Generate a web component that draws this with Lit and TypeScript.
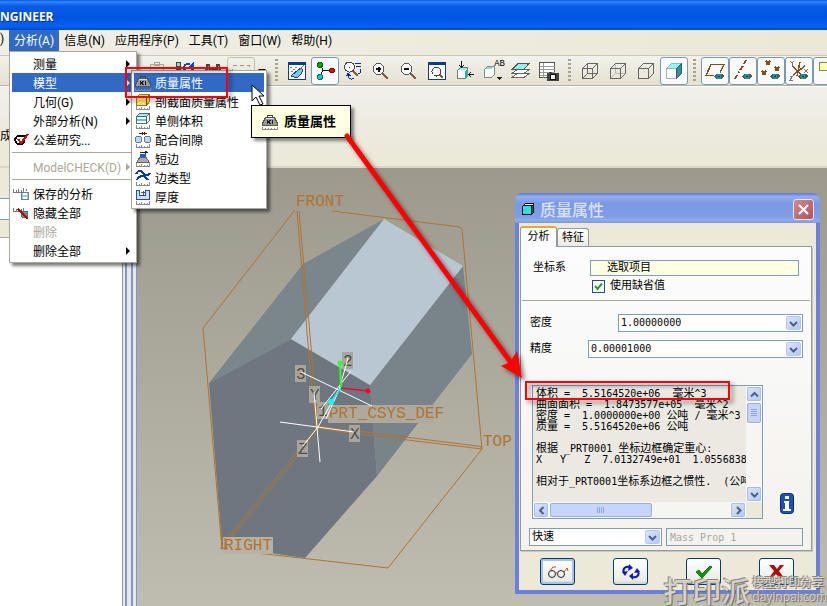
import { LitElement, html, svg, css, nothing } from "lit";
import type { TemplateResult, SVGTemplateResult } from "lit";
import { customElement } from "lit/decorators.js";
import { classMap } from "lit/directives/class-map.js";

const icon = (w: number, h: number, body: unknown) =>
  html`<svg class="ico" width=${w} height=${h} viewBox="0 0 ${w} ${h}" shape-rendering="crispEdges" aria-hidden="true">${body}</svg>`;

/* ---------- menu icons ---------- */
const ruler = svg`<path d="M1.500 12v3.500h13V12M4.500 14v1M6.500 13v2M9.500 14v1M12.500 14v1" fill="none" stroke="#8a8a8a"/>`;

const weight = svg`
  <path d="M5.500 3V1.500h5V3" stroke="#444" fill="none"/>
  <path d="M3.500 3.500h9l3 6v2H0.500v-2z" fill="#9a9a9a" stroke="#555"/>
  <path d="M4 4h7l1 1H3z" fill="#dcdcdc"/>
  <path d="M5.500 6v4M8.500 6l-2 2 2 2M10.500 6v4" stroke="#222" fill="none"/>
  <path d="M0.500 13v2.500h15V13M3.500 14v1M6.500 14v1M9.500 14v1M12.500 14v1" stroke="#8a8a8a" fill="none"/>`;

const menuIcons: Record<string, SVGTemplateResult> = {
  mass: weight,
  section: svg`<path d="M1.500 3.500l3-3h10v7l-3 4h-10z" fill="#ffe05a" stroke="#a67c00"/><path d="M3 10l8-6M3 7l4-3M6 11l5-4" stroke="#fff9b0"/><path d="M11.500 3.500v8M1.500 3.500h10l3-3" stroke="#7a5c00" fill="none"/>${ruler}`,
  volume: svg`<path d="M1.500 3.500l3-3h10v7l-3 3h-10z" fill="#fff" stroke="#666"/><path d="M2 3l3-2h9l-2 2z" fill="#8ff"/><path d="M2 6h9v2H2z" fill="#5cc"/><path d="M11.500 3.500v7M1.500 3.500h10l3-3" fill="none" stroke="#466"/>${ruler}`,
  clearance: svg`<path d="M4 1.500h8M7 0v3M9 0v3" stroke="#222"/><rect x="0.500" y="4.500" width="6" height="6" rx="2" fill="#b8d8f4" stroke="#678"/><rect x="9.500" y="4.500" width="6" height="6" rx="2" fill="#b8d8f4" stroke="#678"/>${ruler}`,
  short: svg`<path d="M5 1.500h7M10 0l2 1.500L10 3" stroke="#222" fill="none"/><path d="M5 3h6v3H5z" fill="#0a64d8"/><path d="M5 6h6l3 5H2z" fill="#aaa" stroke="#666"/>${ruler}`,
  edge: svg`<path d="M1 4c2-4 5-4 7-1s5 3 7 0M2 10c2-5 8-5 11 0" stroke="#0a3aa8" stroke-width="2" fill="none"/>${ruler}`,
  thick: svg`<path d="M1.500 1.500h3v5h6v-5h4v9h-13z" fill="#d4e0fa" stroke="#1c4bbd"/><path d="M6 3.500h4M8.500 2v4" stroke="#555"/>${ruler}`,
  sigma: svg`<path d="M14 3.500H7a4.500 4.500 0 1 0 4 3" fill="none" stroke="#000" stroke-width="2"/><path d="M5 7l3 4L15 2" stroke="#e00000" stroke-width="2" fill="none"/>`,
  saved: svg`<path d="M0.500 3v3M3.500 4v2M5.500 3v3M8.500 4v2M10.500 2v4M13.500 3v2M0 6.500h9" stroke="#777"/><rect x="8.500" y="6.500" width="7" height="7" fill="#9cc" stroke="#688"/><path d="M10 7h4v2h-4zM10 11h4v2h-4z" fill="#fff"/>`,
  hidden: svg`<path d="M0.500 3v3M3.500 4v2M5.500 3v3M8.500 4v2M10.500 3v3M0 6.500h9" stroke="#777"/><path d="M8 6h6v6H9z" fill="#699" stroke="#666"/><path d="M5 4l10 10" stroke="#b00000" stroke-width="2"/>`,
};

/* ---------- toolbar icons, each 20 x 20 ---------- */
const lens = svg`<path d="M11 12l6 6" stroke="#8a5a3a" stroke-width="2"/><circle cx="7.500" cy="8" r="5.500" fill="#f6f8fa" stroke="#555"/>`;
const eye = svg`<path d="M9 15l2-2h6l2 2-2 3h-6z" fill="#555"/><circle cx="14" cy="15.500" r="2.500" fill="#0a9a9a"/><path d="M13 15h2v1h-2z" fill="#033"/>`;
const frame = svg`<rect x="1.500" y="1.500" width="17" height="17" fill="#fff" stroke="#0a3a98"/><path d="M1 1h18v3H1z" fill="#0a3a98"/>`;

const toolIcons: Record<string, SVGTemplateResult> = {
  paste: svg`<path d="M3.500 3.500h13v14h-13zM7.500 1.500h5v3h-5z" fill="#eceada" stroke="#aaa794"/>`,
  regen: svg`<path d="M1.500 1.500h4v4h-4zM1.500 8.500h4v4h-4z" fill="#8dd" stroke="#444"/><path d="M9 7c0-4 4-5 6-3M18 6c0 5-4 6-7 5" fill="none" stroke="#1746b0" stroke-width="2"/><path d="M13 6h6V1zM7 6h5l-2 5z" fill="#1746b0"/>`,
  find: svg`<path d="M3 3h4v4h6V3h4l2 12h-7v-5H9v5H1z" fill="#444"/><path d="M5 5v7M15 5v7" stroke="#999"/>`,
  select: svg`<rect x="1.500" y="4.500" width="17" height="11" fill="none" stroke="#99968a" stroke-width="1" stroke-dasharray="4 3"/>`,
  repaint: svg`${frame}<path d="M4 15l7-6 3-2 2 2-2 4-4 4z" fill="#7cc4f4" stroke="#246"/><path d="M13 8l4-4" stroke="#a60"/><path d="M3 6h2M6 8h2M4 10h2M8 6h2" stroke="#3090e0"/>`,
  spin: svg`<path d="M5 4l3 5-3 7M8 9.500h8" stroke="#111" fill="none"/><circle cx="5" cy="4" r="2.500" fill="#0a0" stroke="#060"/><circle cx="17" cy="9.500" r="2.500" fill="#e00" stroke="#800"/><circle cx="5" cy="16" r="2.500" fill="#0cc" stroke="#077"/>`,
  orient: svg`<path d="M10 10l5 5" stroke="#8a5a3a" stroke-width="2"/><circle cx="6.500" cy="6" r="5" fill="#f6f8fa" stroke="#444"/><path d="M6 6h1M12 2.500h6M13 5.500h5M17 8c2 2 1 4-2 5M5 14c0 4 4 5 6 3" stroke="#0a2aa0" fill="none"/><path d="M3 15h5l-3-4z" fill="#0a2aa0"/>`,
  zoomin: svg`${lens}<path d="M5 8h5M7.500 5.500v5" stroke="#111" stroke-width="2"/>`,
  zoomout: svg`${lens}<path d="M5 8h5" stroke="#111" stroke-width="2"/>`,
  refit: svg`${frame}<path d="M12 13l4 4" stroke="#8a5a3a" stroke-width="2"/><circle cx="9.500" cy="10.500" r="4.500" fill="#eef6fa" stroke="#444"/>`,
  reorient: svg`<path d="M2.500 9.500l3-3h7v8l-3 3h-7z" fill="#fff" stroke="#777"/><path d="M10 10l3-3v8l-3 3z" fill="#3aa"/><path d="M3 9l3-2h6l-2 2z" fill="#8ee"/><path d="M6.500 0v6M4 4l2.500 2L9 4M19 13.500h-5M16 11l-2 2.500 2 2.500" stroke="#111" fill="none"/>`,
  views: svg`<path d="M1.500 8.500l3-3h7v8l-3 3h-7z" fill="#fff" stroke="#888"/><path d="M14 16h5l-2.500 3z" fill="#222"/><path d="M2 8l3-2h6l-3 2z" fill="#8dd"/>`,
  layers: svg`<path d="M1 16.500l5-4h12l-5 4zM1 12.500l5-4h12l-5 4z" fill="#fff" stroke="#666"/><path d="M1 8.500l6-6h11l-5 6z" fill="#8ff0f0" stroke="#555"/>`,
  viewmgr: svg`<path d="M0.500 1.500h15v15h-15z" fill="#fff" stroke="#555"/><path d="M4.500 2v15M1 5.500h15M1 8.500h15M1 11.500h15M1 14.500h8" fill="none" stroke="#999"/><path d="M8 12h12v8H8zM10 11h3v1h-3z" fill="#444"/><circle cx="14" cy="16" r="3" fill="#eee" stroke="#111"/>`,
  wire: svg`<path d="M2.500 7.500h10v10h-10zM7.500 2.500h10v10h-10zM2.500 7.500l5-5M12.500 7.500l5-5M12.500 17.500l5-5M2.500 17.500l5-5" fill="none" stroke="#666"/>`,
  hiddenline: svg`<path d="M7.500 2.500v10h10M2.500 17.500l5-5" stroke="#bbb" fill="none"/><path d="M2.500 7.500h10v10h-10zM2.500 7.500l5-5h10v10l-5 5M12.500 7.500l5-5" fill="none" stroke="#666"/>`,
  nohidden: svg`<path d="M2.500 7.500h10v10h-10zM2.500 7.500l5-5h10v10l-5 5M12.500 7.500l5-5" fill="none" stroke="#666"/>`,
  shaded: svg`<path d="M2.500 7.500h10v10h-10z" fill="#fff" stroke="#aab"/><path d="M2.500 7.500l5-5h10l-5 5z" fill="#8ff" stroke="#8bb"/><path d="M12.500 7.500l5-5v10l-5 5z" fill="#3a8a98" stroke="#267"/>`,
  plane: svg`<path d="M9 14.500H1L6 3.500h13l-4 8" stroke="#8b4a20" stroke-width="1.500" fill="none"/>${eye}`,
  axis: svg`<path d="M2 18l2-4M5 12l1-1M7 9l3-4M11 3l2-4" stroke="#8b4a20" stroke-width="2"/>${eye}`,
  point: svg`<path d="M5 0l4 4M9 0l-4 4M14 6l4 4M18 6l-4 4M1 10l4 4M5 10l-4 4" stroke="#8b4a20" stroke-width="1.500"/>${eye}`,
  csys: svg`<path d="M3 5l9 8M11 1l-3 14M4 14l12-9" stroke="#8b4a20" stroke-width="1.500"/><path d="M1 0l2 2 2-2M3 2v3M15 8l4 4M19 8l-4 4M1 15h3l-3 4h3" stroke="#777" fill="none"/>${eye}`,
  note: svg`<path d="M2.500 1.500h14v8h-14z" fill="#ffffb0" stroke="#884"/>`,
};

interface Entry { label: string; icon?: string; more?: boolean; off?: boolean; open?: boolean }
const analysisMenu: (Entry | null)[] = [
  { label: "测量", more: true },
  { label: "模型", more: true, open: true },
  { label: "几何(G)", more: true },
  { label: "外部分析(N)", more: true },
  { label: "公差研究...", icon: "sigma" },
  null,
  { label: "ModelCHECK(D)", more: true, off: true },
  null,
  { label: "保存的分析", icon: "saved" },
  { label: "隐藏全部", icon: "hidden" },
  { label: "删除", off: true },
  { label: "删除全部", more: true },
];
const modelMenu: Entry[] = [
  { label: "质量属性", icon: "mass", open: true },
  { label: "剖截面质量属性", icon: "section" },
  { label: "单侧体积", icon: "volume" },
  { label: "配合间隙", icon: "clearance" },
  { label: "短边", icon: "short" },
  { label: "边类型", icon: "edge" },
  { label: "厚度", icon: "thick" },
];

const base = css`
  * { box-sizing: border-box; }
  button, input, select { font: inherit; color: inherit; margin: 0; }
  .ico { display: block; flex: none; overflow: visible; }
`;

@customElement("analysis-menu")
export class AnalysisMenu extends LitElement {
  static styles = [base, css`
    :host { display: block; font: 12px/18px Roboto, "Noto Sans CJK SC", sans-serif; color: #000; }
    .menu { list-style: none; margin: 0; padding: 2px; background: #fff; border: 1px solid #aca899; box-shadow: 3px 3px 3px rgba(0, 0, 0, 0.5); width: 128px; }
    .entry { position: relative; }
    .sub { position: absolute; left: 119px; top: -3px; width: 136px; z-index: 1; }
    .item { display: flex; align-items: center; gap: 4px; width: 100%; height: 19px; padding: 0 4px 0 1px; border: 0; background: none; text-align: left; white-space: nowrap; }
    .slot { width: 16px; flex: none; }
    .label { flex: 1; padding-top: 2px; }
    .open { background: #316ac5; color: #fff; }
    .off { color: #aca899; }
    .more { width: 0; border: 4px solid transparent; border-left-color: currentColor; border-right: 0; }
    .rule { height: 8px; padding-top: 3px; }
    .rule::before { content: ""; display: block; height: 1px; background: #aca899; }
  `];

  private row(e: Entry): TemplateResult {
    return html`<button class=${classMap({ item: true, open: !!e.open, off: !!e.off })} ?disabled=${!!e.off}>
      <span class="slot">${e.icon ? icon(16, 16, menuIcons[e.icon]) : nothing}</span>
      <span class="label">${e.label}</span>
      ${e.more ? html`<span class="more"></span>` : nothing}
    </button>`;
  }

  render() {
    return html`<ul class="menu">
      ${analysisMenu.map((e) => e === null
        ? html`<li class="rule" role="separator"></li>`
        : html`<li class="entry">${this.row(e)}
            ${e.open ? html`<ul class="menu sub">${modelMenu.map((m) => html`<li>${this.row(m)}</li>`)}</ul>` : nothing}
          </li>`)}
    </ul>`;
  }
}

const report = [
  "体积 =  5.5164520e+06  毫米^3",
  "曲面面积 =  1.8473577e+05  毫米^2",
  "密度 =  1.0000000e+00 公吨 / 毫米^3",
  "质量 =  5.5164520e+06 公吨",
  "",
  "根据 _PRT0001 坐标边框确定重心:",
  "X   Y   Z  7.0132749e+01  1.0556838",
  "",
  "相对于_PRT0001坐标系边框之惯性.  (公吨",
];

/* Ideographs are set a size larger than the fixed-width Latin text around them. */
const mixed = (line: string) =>
  line.split(/([\u4e00-\u9fff]+)/).map((run, i) => (i % 2 ? html`<span class="han">${run}</span>` : run));

const chevron = (d: string) =>
  html`<svg class="chev" width="9" height="9" viewBox="0 0 9 9" aria-hidden="true"><path d=${d} fill="none" stroke="#4d6185" stroke-width="2"/></svg>`;
const DOWN = "M1 3l3.500 3.500L8 3";
const UP = "M1 6.500L4.500 3 8 6.500";
const LEFT = "M6.500 1L3 4.500 6.500 8";
const RIGHT = "M3 1l3.500 3.500L3 8";

@customElement("mass-dialog")
export class MassDialog extends LitElement {
  static styles = [base, css`
    :host { display: block; font: 11px/16px "DejaVu Sans Mono", "Noto Sans CJK SC", monospace; color: #000; }
    .window { background: #ece9d8; border: 4px solid #6a80dc; border-top: 0; border-radius: 7px 7px 0 0; }
    .title { display: flex; align-items: center; gap: 5px; height: 30px; margin: 0 -4px; padding: 2px 6px 0; border-radius: 7px 7px 0 0; background: linear-gradient(#5b76cf, #93aef0 12%, #7b98e2 35%, #7f9de8 80%, #8fabee 90%, #7f96dd); }
    .name { flex: 1; margin: 0; font: 500 16px/24px "Noto Sans CJK SC", sans-serif; color: #d8e2f8; }
    .close { display: grid; place-items: center; width: 21px; height: 21px; padding: 0; border: 1px solid #e8e4f0; border-radius: 3px; background: linear-gradient(135deg, #cf8a90, #b0555c); }
    .body { padding: 2px 4px 5px 1px; }
    .tabs { display: flex; align-items: flex-end; height: 21px; }
    .tab { border: 1px solid #919b9c; border-bottom: 0; border-radius: 3px 3px 0 0; height: 18px; width: 32px; padding: 0; text-align: center; background: linear-gradient(#fff, #ecebe6); }
    .on { width: 37px; height: 21px; border-top: 2px solid #f0a828; background: #fcfcfe; margin-bottom: -1px; position: relative; padding-bottom: 2px; }
    .panel { border: 1px solid #919b9c; box-shadow: 1px 1px 0 #c9c7ba; background: linear-gradient(#fcfcfe, #f3f2ec); padding-bottom: 4px; }
    .top { padding: 13px 11px 6px 11px; border-bottom: 1px solid #aca899; margin: 0 1px; }
    .row { display: flex; align-items: center; }
    .row > label { flex: none; }
    .csys { width: 57px; }
    .field { border: 1px solid #7f9db9; border-radius: 0; background: #fff; flex: 1; min-width: 0; height: 16px; padding: 0 3px; }
    .pick { background: #ffffe1; padding: 0 16px; }
    .check { display: flex; align-items: center; gap: 5px; margin: 2px 0 0 59px; }
    .check input { appearance: none; width: 13px; height: 13px; border: 1px solid #1c5180; background: #fff; }
    .tick { position: relative; display: grid; place-items: center; }
    .tick svg { position: absolute; pointer-events: none; }
    .values { display: grid; gap: 8px; padding: 13px 8px 0 9px; }
    .density { width: 88px; }
    .accuracy { width: 58px; }
    .drop { position: relative; display: flex; flex: 1; min-width: 0; }
    .drop select { appearance: none; width: 100%; height: 18px; border: 1px solid #7f9db9; border-radius: 0; background: #fff; padding: 0 2px; font-size: 10px; line-height: 16px; }
    .drop .han { font-size: 11px; }
    .arrow { position: absolute; right: 2px; top: 2px; pointer-events: none; }
    .knob { display: grid; place-items: center; width: 15px; height: 14px; border: 1px solid #b4c6f4; border-radius: 2px; background: linear-gradient(135deg, #dbe5fd, #b3c8f8); padding: 0; flex: none; }
    .result { display: flex; align-items: flex-end; gap: 17px; padding: 27px 17px 0 11px; }
    .box { display: grid; grid-template-columns: 1fr 16px; grid-template-rows: 116px 16px; flex: 1; min-width: 0; border: 1px solid #7f9db9; background: #ece9d8; }
    .text { margin: 0; padding: 2px 3px; background: #ebe9e1; overflow: hidden; font: 10px/11px "DejaVu Sans Mono", "Noto Sans CJK SC", monospace; white-space: pre; }
    .line { display: block; height: 11px; }
    .han { font-size: 11px; line-height: 11px; }
    .vbar, .hbar { display: flex; background: #f6f5f1; }
    .vbar { flex-direction: column; }
    .vbar .knob, .hbar .knob { width: 16px; height: 16px; border-color: #fff; box-shadow: inset 0 0 0 1px #a8bdf0; }
    .thumb { border: 1px solid #fff; outline: 1px solid #98aee0; outline-offset: -2px; border-radius: 3px; background: #c6d5fb; display: grid; place-items: center; }
    .vbar .thumb { height: 22px; }
    .hbar .thumb { width: 104px; }
    .spring { flex: 1; }
    .info { display: grid; width: 14px; height: 21px; padding: 0; border: 0; background: none; margin-bottom: 5px; }
    .pair { display: flex; gap: 4px; padding: 9px 8px 0; }
    .pair .drop { flex: 0 1 133px; }
    .mass { color: #aca899; background: #f3f2ec; height: 18px; font-size: 10px; }
    .actions { display: flex; justify-content: space-between; padding: 7px 18px 0 20px; }
    .act { display: grid; place-items: center; width: 35px; height: 27px; padding: 0; border: 1px solid #003c74; border-radius: 3px; background: linear-gradient(#fff, #ecebe5 85%, #d6d0c5); }
    .focus { box-shadow: inset 0 0 0 2px #a9c1ee; }
  `];

  private drop(id: string, value: string) {
    return html`<span class="drop"><select id=${id} aria-label=${id} class=${/\d/.test(value) ? "num" : "han"}><option>${value}</option></select>
      <span class="arrow knob">${chevron(DOWN)}</span></span>`;
  }

  render() {
    return html`<section class="window" role="dialog" aria-labelledby="name">
      <header class="title">
        ${icon(14, 14, svg`<path d="M1 4l3-3h9v9l-3 3H1z" fill="#111"/><path d="M2 4h8v8H2z" fill="#3dd"/><path d="M3 3l1-1h8l-1 1z" fill="#bff"/><path d="M11 4l1-1v7l-1 1z" fill="#066"/>`)}
        <h1 class="name" id="name">质量属性</h1>
        <button class="close" aria-label="关闭"><svg width="13" height="13" viewBox="0 0 13 13"><path d="M2 2l9 9M11 2l-9 9" stroke="#fff" stroke-width="2"/></svg></button>
      </header>
      <div class="body">
        <div class="tabs" role="tablist">
          <button class="tab on" role="tab" aria-selected="true">分析</button>
          <button class="tab" role="tab">特征</button>
        </div>
        <div class="panel">
          <div class="top">
            <div class="row"><label class="csys" for="csys">坐标系</label><input class="field pick" id="csys" value="选取项目"></div>
            <div class="check">
              <span class="tick"><input type="checkbox" id="defaults" checked>
                <svg width="9" height="9" viewBox="0 0 9 9"><path d="M1 4l2.500 3L8 1.500" fill="none" stroke="#21a121" stroke-width="2"/></svg></span>
              <label for="defaults">使用缺省值</label>
            </div>
          </div>
          <div class="values">
            <div class="row"><label class="density" for="density">密度</label>${this.drop("density", "1.00000000")}</div>
            <div class="row"><label class="accuracy" for="accuracy">精度</label>${this.drop("accuracy", "0.00001000")}</div>
          </div>
          <div class="result">
            <div class="box">
              <pre class="text">${report.map((l) => html`<span class="line">${mixed(l)}</span>`)}</pre>
              <div class="vbar">
                <button class="knob" aria-label="上">${chevron(UP)}</button>
                <span class="thumb"><svg width="8" height="8" viewBox="0 0 8 8"><path d="M1 .5h6M1 2.500h6M1 4.500h6M1 6.500h6" stroke="#8ea6e0"/></svg></span>
                <span class="spring"></span>
                <button class="knob" aria-label="下">${chevron(DOWN)}</button>
              </div>
              <div class="hbar">
                <button class="knob" aria-label="左">${chevron(LEFT)}</button>
                <span class="thumb"><svg width="8" height="8" viewBox="0 0 8 8"><path d="M.5 1v6M2.500 1v6M4.500 1v6M6.500 1v6" stroke="#8ea6e0"/></svg></span>
                <span class="spring"></span>
                <button class="knob" aria-label="右">${chevron(RIGHT)}</button>
              </div>
            </div>
            <button class="info" aria-label="信息"><svg width="14" height="21" viewBox="0 0 14 21"><rect x="0.500" y="0.500" width="13" height="20" rx="3" fill="#1c50b8" stroke="#0a2a80"/><path d="M5 3h4v3H5zM4 8h5v8h2v2H3v-2h2v-6H4z" fill="#fff"/></svg></button>
          </div>
          <div class="pair">${this.drop("speed", "快速")}<input class="field mass" aria-label="name" value="Mass_Prop_1" disabled></div>
        </div>
        <footer class="actions">
          <button class="act focus" aria-label="预览"><svg width="22" height="14" viewBox="0 0 22 14"><g fill="none" stroke="#222"><circle cx="5" cy="9" r="3.500"/><circle cx="14" cy="9" r="3.500"/><path d="M8.500 8h2M2 7l4-5h3M17 7l3-4 1 3" stroke="#a05a2a"/></g></svg></button>
          <button class="act" aria-label="重复"><svg width="20" height="16" viewBox="0 0 20 16"><path d="M3 9C1 4 5 2 9 3M17 7c2 5-2 7-6 6" fill="none" stroke="#0818c0" stroke-width="2"/><path d="M8 0l4 4-5 3zM12 9v7L8 12zM1 8l6-1-3 5zM13 9l6-1-3-4z" fill="#0818c0"/></svg></button>
          <button class="act" aria-label="确定"><svg width="18" height="14" viewBox="0 0 18 14"><path d="M1 7l3-2 3 4 8-8 2 1-10 11z" fill="#0a9a0a" stroke="#087008"/></svg></button>
          <button class="act" aria-label="取消"><svg width="17" height="15" viewBox="0 0 17 15"><path d="M1 1h5l3 4 3-4h4l-5 6 5 7h-5l-3-4-4 4H1l5-7z" fill="#b00c0c"/></svg></button>
        </footer>
      </div>
    </section>`;
  }
}

const tag = (x: number, y: number, t: string) =>
  svg`<rect x=${x} y=${y} width="11" height="17" fill="#a9a699"/><text class="axis" x=${x + 1} y=${y + 14}>${t}</text>`;

@customElement("model-view")
export class ModelView extends LitElement {
  static styles = css`
    :host { display: block; overflow: hidden; background: linear-gradient(#9d9a8d, #bfbcb0); }
    svg { display: block; }
    text { font: 16px "Liberation Mono", monospace; fill: #b0742f; }
    .axis { fill: #4c4c4c; }
    .datum { fill: none; stroke: #b0742f; }
    .white { fill: none; stroke: #fff; }
  `;
  render() {
    return html`<svg width="690" height="438" viewBox="137 168 690 438" role="img" aria-label="PRT0001">
      <polygon points="209,383 303,264 384,219 291,339" fill="#7b868c"/>
      <polygon points="463,266 472,354 377,476 370,385" fill="#78838a"/>
      <polygon points="209,383 291,339 370,385 377,476 305,558 222,546" fill="#6e777f"/>
      <polygon points="384,219 463,266 370,385 291,339" fill="#b9c7d3"/>
      <g class="datum">
        <path d="M295 210L203 328L222 549L388 568L482 449L462 229L460 227L332 211"/>
        <path d="M297 211L311 380L316 427M299 211L314 380L318 427"/>
        <path d="M317 426L481 446.500M317 429L482 449M481 446v3"/>
        <path d="M317 427L226 540M319 430L229 540"/>
      </g>
      <rect x="223" y="537" width="50" height="17" fill="#b6b3a6"/>
      <rect x="328" y="405" width="106" height="18" fill="#adaa9d"/>
      <path class="datum" d="M222 530v19M225 538v12M220 548h8"/>
      <text x="296" y="206">FRONT</text>
      <text x="483" y="446">TOP</text>
      <text x="224" y="550">RIGHT</text>
      <text x="329" y="418">PRT_CSYS_DEF</text>
      ${tag(295, 365, "3")}${tag(342, 352, "2")}${tag(309, 386, "Y")}${tag(317, 402, "1")}${tag(349, 425, "X")}${tag(297, 440, "Z")}
      <g class="white">
        <path d="M301 372L372 406M348 358L339 390L326 419M351 371L321 409"/>
        <path d="M280 422L354 432M314 392L320 462M303 446L318 427L338 391"/>
      </g>
      <path d="M340 363L341 388" stroke="#2eff2e" stroke-width="2"/><circle cx="340" cy="363" r="2.500" fill="#2eff2e"/>
      <path d="M341 388L368 391" stroke="#ff0030" stroke-width="1.500"/><circle cx="368" cy="391" r="2.500" fill="#ff0030"/>
      <path d="M341 388L331 402" stroke="#0ff" stroke-width="1.500"/><circle cx="331" cy="402" r="3" fill="#0ff"/>
    </svg>`;
  }
}

const groups: { names: string[]; active: string[] }[] = [
  { names: ["repaint", "spin", "orient", "zoomin", "zoomout", "refit", "reorient", "views", "layers", "viewmgr"], active: ["spin"] },
  { names: ["wire", "hiddenline", "nohidden", "shaded"], active: ["shaded"] },
  { names: ["plane", "axis", "point", "csys", "note"], active: ["plane", "axis", "point", "csys", "note"] },
];

@customElement("app-root")
export class AppRoot extends LitElement {
  static styles = [base, css`
    :host { display: flex; flex-direction: column; position: relative; min-height: 100vh; overflow: hidden; background: #ece9d8; font: 12px/19px Roboto, "Noto Sans CJK SC", sans-serif; color: #000; }
    .caption { display: flex; align-items: center; height: 30px; padding-top: 4px; background: linear-gradient(#0a52d8, #2f86ff 6%, #0a5ae6 20%, #0054e3 60%, #0262f5 88%, #0146c4); }
    .app { margin: 0; font: bold 12px/20px "Open Sans", sans-serif; color: #fff; text-shadow: 1px 1px 0 #0a2c88; }
    .menubar { display: flex; height: 25px; padding-bottom: 4px; background: linear-gradient(90deg, #f0efe6, #ebe8d8); }
    .first { width: 9px; }
    .anchor { position: relative; z-index: 3; }
    .drop { position: absolute; left: 0; top: 21px; }
    .top { height: 21px; padding: 2px 5px 0; border: 0; background: none; white-space: nowrap; }
    .lit { background: #316ac5; color: #fff; }
    .toolbar { display: flex; align-items: center; height: 31px; padding-left: 143px; border-top: 1px solid #cdc9b5; border-bottom: 1px solid #b8b4a0; background: linear-gradient(#f3f2ec, #e4e1d0); overflow: hidden; }
    .tool { display: grid; place-items: center; flex: none; width: 28px; height: 28px; padding: 0; border: 1px solid transparent; background: none; position: relative; }
    .active { border-color: #7a98b8; border-radius: 3px; background: #fafaf8; }
    .boxed { border-color: #c4c0ac; border-radius: 3px; }
    .cap { position: absolute; right: 1px; top: 1px; font: 9px/10px "Liberation Mono", monospace; }
    .more { border: 4px solid transparent; border-top-color: #111; border-bottom: 0; margin: 0 4px 0 3px; }
    .grip { flex: none; width: 3px; height: 24px; margin: 0 5px; background: repeating-linear-gradient(#a5a290 0 2px, transparent 2px 4px); }
    .dash { height: 82px; display: flex; align-items: flex-end; padding-bottom: 20px; border-top: 1px solid #fff; border-bottom: 2px solid #d9d6c4; background: linear-gradient(#f1f0eb, #edebe0 50%, #ebe8d6); }
    .work { display: flex; flex: 1; }
    .side { width: 125px; flex: none; display: flex; flex-direction: column; background: #ece9d8; }
    .box { height: 22px; margin-top: 30px; border: 1px solid #7f9db9; border-left: 0; background: #fff; }
    .tree { flex: 1; margin-top: 17px; background: #fff; border-top: 1px solid #aca899; border-right: 1px solid #7f9db9; margin-right: 2px; }
    .split { width: 12px; flex: none; border-left: 2px solid #7a96df; border-right: 1px solid #7a96df; background: linear-gradient(90deg, #ece9d8 4px, #7a96df 4px 6px, #ece9d8 6px); }
    .stage { flex: 1; position: relative; display: grid; overflow: hidden; }
    .dialog { position: absolute; left: 378px; top: 25px; width: 305px; }
    .tip { position: absolute; z-index: 4; left: 251px; top: 105px; display: flex; align-items: center; gap: 6px; width: 100px; height: 33px; padding: 0 10px; border: 1px solid #000; background: #ffffe1; font-weight: 700; font-size: 13px; white-space: nowrap; box-shadow: 3px 3px 3px rgba(0, 0, 0, 0.45); }
    .marks { position: absolute; z-index: 5; left: 0; top: 0; pointer-events: none; }
    .brand { position: absolute; z-index: 6; right: 0; bottom: 0; display: flex; align-items: center; gap: 2px; height: 32px; color: #d2d1cb; text-shadow: 1px 1px 1px #666, -1px -1px 0 #8a8880; white-space: nowrap; pointer-events: none; }
    .big { font: 500 29px/32px "Noto Sans CJK SC", sans-serif; }
    .small { font: 500 12px/14px "Open Sans", "Noto Sans CJK SC", sans-serif; display: grid; }
  `];

  private tool(name: string, active: boolean) {
    return html`<button class=${classMap({ tool: true, active, boxed: name === "select" })} aria-label=${name}>
      ${icon(20, 20, toolIcons[name])}${name === "views" ? html`<span class="cap">AB</span>` : nothing}</button>`;
  }

  render() {
    return html`
      <header class="caption"><p class="app">NGINEER</p></header>
      <nav class="menubar">
        <span class="first">)</span>
        <div class="anchor"><button class="top lit">分析(A)</button><analysis-menu class="drop"></analysis-menu></div>
        ${["信息(N)", "应用程序(P)", "工具(T)", "窗口(W)", "帮助(H)"].map((m) => html`<button class="top">${m}</button>`)}
      </nav>
      <div class="toolbar" role="toolbar">
        ${["paste", "regen", "find", "select"].map((n) => this.tool(n, false))}<span class="more"></span>
        ${groups.map((g) => html`<span class="grip"></span>${g.names.map((n) => this.tool(n, g.active.includes(n)))}`)}
      </div>
      <div class="dash"><span>成</span></div>
      <main class="work">
        <aside class="side"><div class="box"></div><div class="tree"></div></aside>
        <div class="split"></div>
        <div class="stage"><model-view></model-view><mass-dialog class="dialog"></mass-dialog></div>
      </main>
      <div class="tip" role="tooltip">${icon(16, 16, weight)}质量属性</div>
      <svg class="marks" width="827" height="606" viewBox="0 0 827 606" aria-hidden="true">
        <defs><filter id="soft" x="-10%" y="-10%" width="120%" height="120%"><feDropShadow dx="3" dy="3" stdDeviation="2" flood-opacity="0.5"/></filter></defs>
        <g filter="url(#soft)" fill="none" stroke="#f00" stroke-width="2">
          <rect x="126" y="68" width="101" height="29"/>
          <rect x="526" y="382" width="203" height="17"/>
        </g>
        <g filter="url(#soft)"><path d="M347 136L512 364" stroke="#f00" stroke-width="5" stroke-linecap="round"/><path d="M522 378L501 366L510 362L517 351z" fill="#f00"/></g>
        <path d="M252 85v16l4-4 4 8 3-1-4-8h5z" fill="#fff" stroke="#000"/>
      </svg>
      <div class="brand"><span class="big">打印派</span><span class="small"><span>模型打印分享</span><span>dayinpai.com</span></span></div>
    `;
  }
}
